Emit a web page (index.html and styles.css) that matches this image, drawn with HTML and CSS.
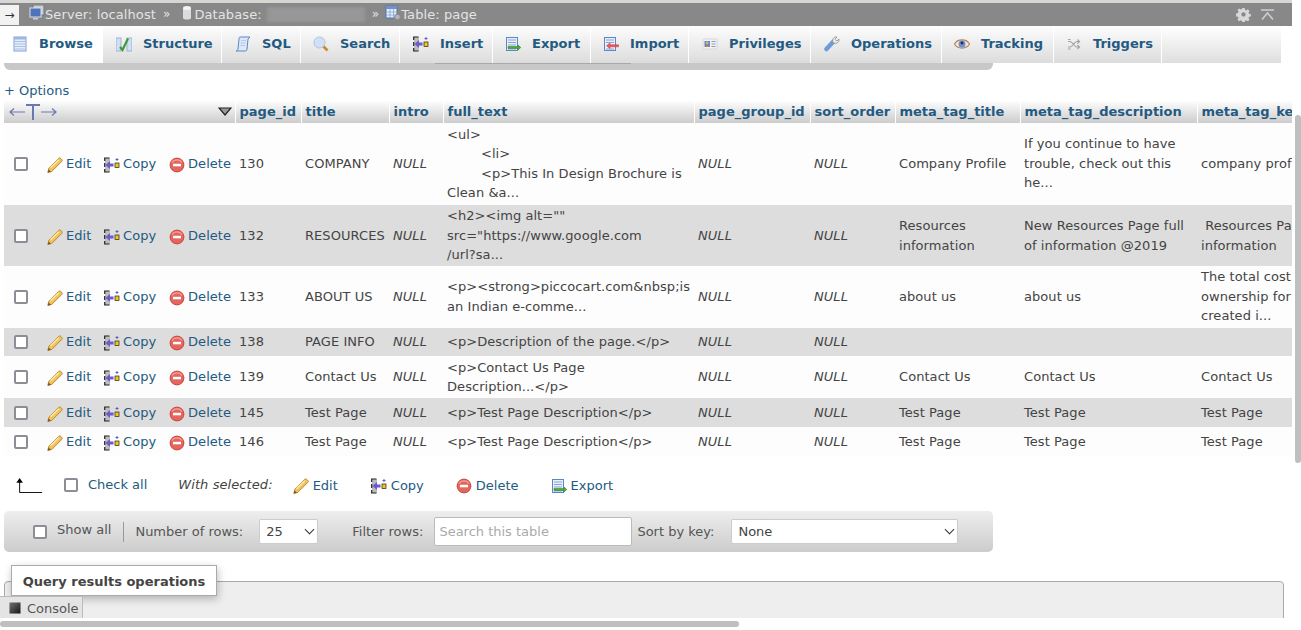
FILE: index.html
```html
<!DOCTYPE html>
<html lang="en">
<head>
<meta charset="utf-8">
<title>Table: page</title>
<link rel="stylesheet" href="styles.css">
</head>
<body>
<svg class="sprites" width="0" height="0" aria-hidden="true">
  <defs>
    <symbol id="i-edit" viewBox="0 0 16 16">
      <path d="M1.800 11.300 11.800 1.300c.8-.6 1.500-.4 2.100.2l.8.8c.6.700.7 1.400.1 2.100L4.800 14.400.8 15.500z" fill="#f2c35c" stroke="#b5832b" stroke-width=".9"/>
      <path d="M3.500 10.800 11.800 2.800" stroke="#fdeeb5" stroke-width="1.200"/>
      <path d="M.8 15.500l.8-3 2.400 2.300z" fill="#7a5424"/>
    </symbol>
    <symbol id="i-copy" viewBox="0 0 16 16">
      <rect x="1" y="1" width="5" height="14" fill="#bdbdbd"/>
      <path d="M5.500 1H.7v3M.7 6v4M.7 12v3h4.800" fill="none" stroke="#222" stroke-width="1.200"/>
      <path d="M1.500 8l4.500-4v2.500h3.500v3H6V12z" fill="#6a5bd0"/>
      <rect x="11" y="6" width="4" height="4.500" fill="#f5c518" stroke="#222" stroke-width=".7"/>
      <path d="M13 1v3M11.500 2.500h3" stroke="#5a50c0" stroke-width=".9"/>
    </symbol>
    <symbol id="i-delete" viewBox="0 0 16 16">
      <circle cx="8" cy="8" r="6.900" fill="#e4665e" stroke="#c9453e"/>
      <path d="M3 5.500c2-3.500 8-3.500 10 0" fill="none" stroke="#f3a29c" stroke-width="1.200"/>
      <rect x="4" y="6.800" width="8" height="2.500" fill="#fff"/>
    </symbol>
    <symbol id="i-export" viewBox="0 0 16 16">
      <rect x="1.500" y="1.500" width="11" height="13" fill="#e8effa" stroke="#5c86c4"/>
      <path d="M3 4h8M3 6.500h8M3 9h8M3 13h8" stroke="#87a6d4"/>
      <path d="M3 10.500h10v-1.500l2.800 2.500-2.800 2.500v-1.500H3z" fill="#4da83a" stroke="#2e7d21" stroke-width=".5"/>
    </symbol>
  </defs>
</svg>

<header class="topbar">
  <a class="topbar-toggle">→</a>
  <nav class="crumbs">
    <span class="crumb">
      <svg class="crumb-icon" viewBox="0 0 16 16"><rect x="4" y="0" width="11" height="10" fill="#c9ced6" stroke="#777"/><rect x="1" y="3" width="11" height="9" fill="#4d74b8" stroke="#dde"/><rect x="4" y="13" width="5" height="1.500" fill="#ccc"/></svg>Server: localhost
    </span>
    <span class="sep">»</span>
    <span class="crumb">
      <svg class="crumb-icon db" viewBox="0 0 10 16"><path d="M1 3v10c0 2 8 2 8 0V3z" fill="#dcdcdc"/><ellipse cx="5" cy="3" rx="4" ry="2" fill="#f4f4f4"/></svg>Database:
      <span class="blur"></span>
    </span>
    <span class="sep sep-last">»</span>
    <span class="crumb">
      <svg class="crumb-icon" viewBox="0 0 16 16"><rect x="1" y="1" width="11" height="12" fill="#e7eef8" stroke="#4d74b8"/><rect x="1" y="1" width="11" height="3" fill="#6f93cc"/><path d="M1 7h11M1 10h11M5 4v9M8.500 4v9" stroke="#88a4d0" stroke-width=".8"/><circle cx="12.500" cy="12" r="2.800" fill="#b5b5b5" stroke="#888"/></svg>Table: page
    </span>
  </nav>
  <div class="topbar-tools">
    <svg class="gear" viewBox="0 0 16 16"><path d="M6.800 1h2.400l.4 2 1.300.6 1.800-1.100 1.700 1.700-1.100 1.800.6 1.300 2 .4v2.400l-2 .4-.6 1.300 1.100 1.800-1.700 1.700-1.800-1.100-1.300.6-.4 2H6.800l-.4-2-1.300-.6-1.800 1.100-1.700-1.700 1.100-1.800-.6-1.300-2-.4V6.800l2-.4.6-1.300-1.100-1.800 1.700-1.700 1.800 1.100 1.300-.6z" fill="#d8d8d8"/><circle cx="8" cy="8" r="2.300" fill="#888"/></svg>
    <svg class="collapse" viewBox="0 0 13 12"><path d="M0 1h13M1 10.500l5.500-6.500 5.500 6.500" fill="none" stroke="#d0d0d0" stroke-width="1.500"/></svg>
  </div>
</header>

<div class="tabs-wrap">
  <nav class="tabs">
    <a class="tab active">
      <svg class="tab-icon" viewBox="0 0 16 16"><rect x="2" y="1" width="12" height="14" fill="#e6eefa" stroke="#7f9fd2"/><rect x="2" y="1" width="12" height="2.500" fill="#9db8e4"/><path d="M3 5.500h10M3 8h10M3 10.500h10M3 13h10" stroke="#a9c0e6"/></svg>Browse</a>
    <a class="tab tab-structure">
      <svg class="tab-icon" viewBox="0 0 16 16"><rect x="0" y="2" width="5" height="13" fill="#cfe0f5" stroke="#9fb4d4"/><rect x="11" y="2" width="5" height="13" fill="#cfe0f5" stroke="#9fb4d4"/><path d="M4 11l2.500 3L12 2.500" fill="none" stroke="#3f9a3a" stroke-width="2.200"/></svg>Structure</a>
    <a class="tab tab-sql">
      <svg class="tab-icon" viewBox="0 0 16 16"><path d="M5 1h10l-2 2-1 10c-.2 2-1 2-2 2H1c1 0 2-1 2-2l1-10c.1-1 .2-2 1-2z" fill="#dce7f7" stroke="#5c86c4"/><path d="M6 4.500h5M5.500 7h5M5.300 9.500h5" stroke="#b5cbe9"/></svg>SQL</a>
    <a class="tab tab-search">
      <svg class="tab-icon" viewBox="0 0 16 16"><circle cx="6.500" cy="6.500" r="5.500" fill="#cfe0f7" stroke="#b6c3d4"/><path d="M10.500 10.500l4 4" stroke="#c88a3a" stroke-width="2.600"/></svg>Search</a>
    <a class="tab tab-insert">
      <svg class="tab-icon" viewBox="0 0 16 16"><use href="#i-copy"/></svg>Insert</a>
    <a class="tab tab-export">
      <svg class="tab-icon" viewBox="0 0 16 16"><use href="#i-export"/></svg>Export</a>
    <a class="tab tab-import">
      <svg class="tab-icon" viewBox="0 0 16 16"><rect x="1.500" y="1.500" width="11" height="13" fill="#e8effa" stroke="#5c86c4"/><path d="M3 4h8M3 6.500h8M3 13h8" stroke="#87a6d4"/><path d="M15.500 8.800H7V7L3.500 9.800 7 12.500v-1.700h8.500z" fill="#f05a5a" stroke="#c62f2f" stroke-width=".5"/></svg>Import</a>
    <a class="tab tab-priv">
      <svg class="tab-icon" viewBox="0 0 16 16"><rect x="1" y="3" width="14" height="10" rx="1" fill="#f0f2f6" stroke="#d4d8e0"/><rect x="2.500" y="5" width="5.500" height="6" fill="#5b86d0"/><circle cx="5.200" cy="7" r="1.400" fill="#f0b050"/><path d="M3 11c.5-2 4-2 4.500 0" fill="#e07a3a"/><path d="M9.500 5.500h4M9.500 8h4M9.500 10.500h4" stroke="#8d9db8"/></svg>Privileges</a>
    <a class="tab tab-ops">
      <svg class="tab-icon" viewBox="0 0 16 16"><path d="M2.500 13 9 6" stroke="#6f9bd8" stroke-width="4.500" stroke-linecap="round"/><path d="M9 6.500c-1-3.500 1-6 4-5.500l-2 2.500 2 1.500 2-2c.5 3-2 5-5 4z" fill="#f1f1f1" stroke="#8a8a8a" stroke-width=".8"/></svg>Operations</a>
    <a class="tab tab-track">
      <svg class="tab-icon" viewBox="0 0 16 16"><path d="M.5 8c3-5.500 12-5.500 15 0-3 5.500-12 5.500-15 0z" fill="#f5ead9" stroke="#b9825a" stroke-width="1.200"/><circle cx="8" cy="8" r="3.500" fill="#6c8fd6"/><circle cx="8" cy="7" r="1.400" fill="#1d2f52"/></svg>Tracking</a>
    <a class="tab tab-trig">
      <svg class="tab-icon" viewBox="0 0 16 16"><path d="M2 5.500h2c3 0 4 5.500 7 5.500h2M2 11h2c3 0 4-5.500 7-5.500h2M2 3.500l2.500 0M2 13l2.500 0M11.500 3.500l2 2-2 2M11.500 9l2 2-2 2" fill="none" stroke="#a2a2a2" stroke-width="1.100"/></svg>Triggers</a>
  </nav>
</div>

<main class="content">
  <a class="options">+ Options</a>

  <div class="table-clip">
    <table class="results">
      <colgroup>
        <col class="c-check"><col class="c-edit"><col class="c-copy"><col class="c-del">
        <col class="c-id"><col class="c-title"><col class="c-intro"><col class="c-full">
        <col class="c-group"><col class="c-sort"><col class="c-mtitle"><col class="c-mdesc"><col class="c-mkey">
      </colgroup>
      <thead>
        <tr>
          <th colspan="4" class="th-actions">
            <div class="th-actions-in">
              <svg class="resize" viewBox="0 0 48 16"><path d="M1 8h15M5 4.500 1 8l4 3.500M32 8h15M43 4.500 47 8l-4 3.500" fill="none" stroke="#6a78b0" stroke-width="1.200"/><path d="M17 1h14M24 1v15" fill="none" stroke="#6a78b0" stroke-width="2"/></svg>
              <svg class="sort-caret" viewBox="0 0 14 9"><path d="M1 1h12L7 8z" fill="#999" stroke="#222" stroke-width="1.200"/></svg>
            </div>
          </th>
          <th>page_id</th><th>title</th><th>intro</th><th>full_text</th><th>page_group_id</th><th>sort_order</th><th>meta_tag_title</th><th>meta_tag_description</th><th class="nowrap">meta_tag_keyword</th>
        </tr>
      </thead>
      <tbody>
        <tr class="h-82">
          <td class="ck"><input type="checkbox"></td>
          <td class="act"><a><svg class="ic"><use href="#i-edit"/></svg>Edit</a></td>
          <td class="act"><a><svg class="ic"><use href="#i-copy"/></svg>Copy</a></td>
          <td class="act"><a><svg class="ic"><use href="#i-delete"/></svg>Delete</a></td>
          <td>130</td><td>COMPANY</td><td class="null">NULL</td>
          <td class="full"><div class="nest1">&lt;ul&gt;</div><div class="nest2">&lt;li&gt;</div><div class="nest3">&lt;p&gt;This In Design Brochure is</div><div>Clean &amp;a...</div></td>
          <td class="null">NULL</td><td class="null">NULL</td><td>Company Profile</td>
          <td>If you continue to have trouble, check out this he...</td><td class="nowrap">company profile</td>
        </tr>
        <tr class="h-61">
          <td class="ck"><input type="checkbox"></td>
          <td class="act"><a><svg class="ic"><use href="#i-edit"/></svg>Edit</a></td>
          <td class="act"><a><svg class="ic"><use href="#i-copy"/></svg>Copy</a></td>
          <td class="act"><a><svg class="ic"><use href="#i-delete"/></svg>Delete</a></td>
          <td>132</td><td>RESOURCES</td><td class="null">NULL</td>
          <td class="full">&lt;h2&gt;&lt;img alt=""<br>src="https://www.google.com<br>/url?sa...</td>
          <td class="null">NULL</td><td class="null">NULL</td><td>Resources information</td>
          <td>New Resources Page full of information @2019</td><td class="nowrap">&nbsp;Resources Page<br>information</td>
        </tr>
        <tr class="h-62">
          <td class="ck"><input type="checkbox"></td>
          <td class="act"><a><svg class="ic"><use href="#i-edit"/></svg>Edit</a></td>
          <td class="act"><a><svg class="ic"><use href="#i-copy"/></svg>Copy</a></td>
          <td class="act"><a><svg class="ic"><use href="#i-delete"/></svg>Delete</a></td>
          <td>133</td><td>ABOUT US</td><td class="null">NULL</td>
          <td class="full nowrap">&lt;p&gt;&lt;strong&gt;piccocart.com&amp;nbsp;is<br>an Indian e-comme...</td>
          <td class="null">NULL</td><td class="null">NULL</td><td>about us</td><td>about us</td>
          <td class="nowrap">The total cost of<br>ownership for<br>created i...</td>
        </tr>
        <tr class="h-28">
          <td class="ck"><input type="checkbox"></td>
          <td class="act"><a><svg class="ic"><use href="#i-edit"/></svg>Edit</a></td>
          <td class="act"><a><svg class="ic"><use href="#i-copy"/></svg>Copy</a></td>
          <td class="act"><a><svg class="ic"><use href="#i-delete"/></svg>Delete</a></td>
          <td>138</td><td>PAGE INFO</td><td class="null">NULL</td>
          <td class="full">&lt;p&gt;Description of the page.&lt;/p&gt;</td>
          <td class="null">NULL</td><td class="null">NULL</td><td></td><td></td><td></td>
        </tr>
        <tr class="h-42">
          <td class="ck"><input type="checkbox"></td>
          <td class="act"><a><svg class="ic"><use href="#i-edit"/></svg>Edit</a></td>
          <td class="act"><a><svg class="ic"><use href="#i-copy"/></svg>Copy</a></td>
          <td class="act"><a><svg class="ic"><use href="#i-delete"/></svg>Delete</a></td>
          <td>139</td><td>Contact Us</td><td class="null">NULL</td>
          <td class="full">&lt;p&gt;Contact Us Page<br>Description...&lt;/p&gt;</td>
          <td class="null">NULL</td><td class="null">NULL</td><td>Contact Us</td><td>Contact Us</td><td class="nowrap">Contact Us</td>
        </tr>
        <tr class="h-29">
          <td class="ck"><input type="checkbox"></td>
          <td class="act"><a><svg class="ic"><use href="#i-edit"/></svg>Edit</a></td>
          <td class="act"><a><svg class="ic"><use href="#i-copy"/></svg>Copy</a></td>
          <td class="act"><a><svg class="ic"><use href="#i-delete"/></svg>Delete</a></td>
          <td>145</td><td>Test Page</td><td class="null">NULL</td>
          <td class="full">&lt;p&gt;Test Page Description&lt;/p&gt;</td>
          <td class="null">NULL</td><td class="null">NULL</td><td>Test Page</td><td>Test Page</td><td class="nowrap">Test Page</td>
        </tr>
        <tr class="h-29">
          <td class="ck"><input type="checkbox"></td>
          <td class="act"><a><svg class="ic"><use href="#i-edit"/></svg>Edit</a></td>
          <td class="act"><a><svg class="ic"><use href="#i-copy"/></svg>Copy</a></td>
          <td class="act"><a><svg class="ic"><use href="#i-delete"/></svg>Delete</a></td>
          <td>146</td><td>Test Page</td><td class="null">NULL</td>
          <td class="full">&lt;p&gt;Test Page Description&lt;/p&gt;</td>
          <td class="null">NULL</td><td class="null">NULL</td><td>Test Page</td><td>Test Page</td><td class="nowrap">Test Page</td>
        </tr>
      </tbody>
    </table>
  </div>

  <div class="bulk">
    <svg class="arrow-up" viewBox="0 0 30 16"><path d="M5 15.500h24M5 15.500V3" fill="none" stroke="#000" stroke-width="1"/><path d="M5 0l3.500 5h-7z" fill="#000"/></svg>
    <input type="checkbox" class="bulk-check">
    <a class="check-all">Check all</a>
    <em class="with">With selected:</em>
    <a class="bulk-btn b-edit"><svg class="ic"><use href="#i-edit"/></svg>Edit</a>
    <a class="bulk-btn b-copy"><svg class="ic"><use href="#i-copy"/></svg>Copy</a>
    <a class="bulk-btn b-del"><svg class="ic"><use href="#i-delete"/></svg>Delete</a>
    <a class="bulk-btn b-exp"><svg class="ic"><use href="#i-export"/></svg>Export</a>
  </div>

  <div class="nav-bar">
    <input type="checkbox" class="show-check">
    <label class="show-all">Show all</label>
    <span class="divider"></span>
    <label class="lbl-rows">Number of rows:</label>
    <span class="sel-wrap sel-wrap-rows"><select class="sel"><option>25</option></select></span>
    <label class="lbl-filter">Filter rows:</label>
    <input class="filter" type="text" placeholder="Search this table">
    <label class="lbl-sort">Sort by key:</label>
    <span class="sel-wrap sel-wrap-sort"><select class="sel"><option>None</option></select></span>
  </div>

  <section class="ops">
    <h3 class="ops-title">Query results operations</h3>
  </section>
</main>

<div class="console">
  <svg class="console-icon" viewBox="0 0 12 12"><defs><linearGradient id="cg" x1="0" y1="0" x2="1" y2="1"><stop offset="0" stop-color="#777"/><stop offset="1" stop-color="#111"/></linearGradient></defs><rect width="12" height="12" fill="url(#cg)" stroke="#ddd"/></svg>
  Console
</div>

<div class="hscroll"></div>
<div class="vscroll"></div>
</body>
</html>
```
FILE: styles.css
```css
* { box-sizing: border-box; }
html, body { margin: 0; height: 100%; overflow: hidden; }
body {
  position: relative;
  width: 1301px;
  height: 630px;
  background: #fff;
  color: #444;
  font: 13px/19px "DejaVu Sans", sans-serif;
}
a { color: #235a81; text-decoration: none; }
.sprites { position: absolute; }

/* top bar */
.topbar {
  display: flex;
  align-items: center;
  height: 26px;
  margin-right: 9px;
  border-top: 3px solid #d8d6d2;
  background: #888;
  color: #e4e4e4;
  letter-spacing: .1px;
}
.topbar-toggle {
  display: flex;
  align-items: center;
  justify-content: center;
  width: 19px;
  height: 20px;
  margin-top: 1px;
  background: #f2f2f2;
  color: #333;
  font-size: 12px;
}
.crumbs { display: flex; align-items: center; padding-left: 10px; flex: 1; }
.crumb { display: flex; align-items: center; }
.crumb-icon { width: 16px; height: 16px; margin-bottom: 3px; }
.crumb-icon.db { width: 10px; margin-right: 2px; margin-left: 0; }
.sep { margin: 0 12px 0 7px; font-size: 12px; }
.sep-last { margin: 0 6px 0 7px; }
.blur {
  display: inline-block;
  width: 98px;
  height: 15px;
  margin-left: 5px;
  background: #979797;
  filter: blur(1.500px);
}
.topbar-tools { display: flex; align-items: center; gap: 10px; padding-right: 18px; }
.gear { width: 15px; height: 15px; }
.collapse { width: 13px; height: 12px; }

/* tabs */
.tabs-wrap {
  position: relative;
  height: 44px;
  margin-right: 20px;
}
.tabs-wrap::before {
  content: "";
  position: absolute;
  z-index: 1;
  left: 435px;
  top: 37px;
  width: 196px;
  height: 1px;
  background: #a8a8a8;
}
.tabs-wrap::after {
  content: "";
  position: absolute;
  left: 4px;
  top: 30px;
  width: 989px;
  height: 14px;
  border-radius: 0 0 6px 6px;
  background: #c8c8c8;
}
.tabs {
  position: relative;
  z-index: 1;
  display: flex;
  height: 37px;
  background: linear-gradient(#fff, #dedede);
}
.tab {
  display: flex;
  align-items: center;
  height: 37px;
  padding-left: 12px;
  padding-bottom: 2px;
  border-right: 1px solid #fff;
  background: linear-gradient(#fdfdfd, #dcdcdc);
  color: #235a81;
  font-weight: 700;
  font-size: 13px;
}
.tab-icon { flex: none; width: 16px; height: 16px; margin-right: 11px; }
.tab.active { width: 103px; background: #fff; }
.tab-structure { width: 119px; padding-left: 13px; }
.tab-sql { width: 79px; padding-left: 13px; }
.tab-search { padding-left: 12px; width: 99px; }
.tab-insert { width: 93px; padding-left: 13px; }
.tab-export { width: 98px; }
.tab-import { width: 98px; }
.tab-priv { width: 122px; padding-left: 13px; }
.tab-ops { width: 131px; padding-left: 13px; }
.tab-track { width: 112px; padding-left: 12px; }
.tab-trig { width: 108px; }

/* content */
.content { padding: 0 4px; }
.options { display: block; height: 19px; margin-top: 11px; line-height: 19px; }

.table-clip { width: 1288px; overflow: hidden; }
.results {
  width: 1476px;
  table-layout: fixed;
  border-collapse: collapse;
}
.c-check { width: 39px; }
.c-edit { width: 57px; }
.c-copy { width: 65px; }
.c-del { width: 70px; }
.c-id { width: 66px; }
.c-title { width: 88px; }
.c-intro { width: 54px; }
.c-full { width: 251px; }
.c-group { width: 116px; }
.c-sort { width: 85px; }
.c-mtitle { width: 125px; }
.c-mdesc { width: 177px; }
.c-mkey { width: 283px; }

.results th {
  height: 23px;
  padding: 0 4px;
  border-right: 1px solid #fff;
  background: linear-gradient(#fff, #ccc);
  color: #235a81;
  font-weight: 700;
  text-align: left;
  white-space: nowrap;
}
.th-actions-in { display: flex; align-items: center; justify-content: space-between; margin-right: -1px; }
.resize { width: 48px; height: 16px; margin-left: 1px; }
.sort-caret { width: 14px; height: 9px; }
.results td {
  padding: 0 4px;
  background: #fdfdfd;
  line-height: 19.500px;
  letter-spacing: .06px;
  vertical-align: middle;
  overflow: hidden;
}
.results tbody tr:nth-child(even) td { background: #ddd; }
.results .h-82 td, .results .h-62 td, .results .h-28 td { padding-bottom: 1px; }
.h-82 { height: 82px; }
.h-61 { height: 61px; }
.h-62 { height: 62px; }
.h-28 { height: 28px; }
.h-42 { height: 42px; }
.h-29 { height: 29px; }
.nowrap { white-space: nowrap; }
.null { font-style: italic; }
.results td.ck { padding: 0 0 1px 10px; }
.nest2 { padding-left: 34px; }
.nest3 { padding-left: 34px; }
.act { white-space: nowrap; }
.act a { display: flex; align-items: center; }
.bulk-btn { display: inline-flex; align-items: center; }
.ic { flex: none; width: 16px; height: 16px; margin-right: 3px; margin-top: 2px; }
.bulk-btn .ic { margin-right: 4px; }
input[type="checkbox"] {
  appearance: none;
  width: 14px;
  height: 14px;
  margin: 0;
  border: 2px solid #8d8d97;
  border-radius: 2px;
  background: #fff;
  vertical-align: middle;
}

/* bulk row */
.bulk {
  display: flex;
  align-items: center;
  height: 30px;
  margin-top: 14px;
}
.arrow-up { width: 30px; height: 15px; margin-left: 10px; flex: none; }
.bulk-check { margin-left: 20px !important; }
.check-all { margin-left: 10px; margin-top: -2px; }
.with { margin-left: 31px; margin-top: -2px; letter-spacing: .08px; }
.bulk-btn { margin-left: 20px; }
.b-copy { margin-left: 33px; }
.b-del { margin-left: 32px; }
.b-exp { margin-left: 32px; }

/* nav */
.nav-bar {
  display: flex;
  align-items: center;
  width: 989px;
  height: 41px;
  margin-top: 11px;
  padding-left: 29px;
  border-radius: 5px;
  background: linear-gradient(#eee, #ccc);
  color: #555;
}
.show-all { margin-left: 10px; margin-top: -4px; }
.divider { width: 1px; height: 20px; margin-left: 12px; background: #999; }
.lbl-rows { margin-left: 11px; }
.sel-wrap { position: relative; display: block; height: 25px; margin-left: 15px; }
.sel-wrap::after {
  content: "";
  position: absolute;
  right: 5px;
  top: 7px;
  width: 6px;
  height: 6px;
  border-right: 1px solid #333;
  border-bottom: 1px solid #333;
  transform: rotate(45deg);
  pointer-events: none;
}
.sel-wrap-rows { width: 59px; margin-left: 16px; }
.sel-wrap-sort { width: 227px; margin-left: 17px; }
.sel {
  appearance: none;
  width: 100%;
  height: 25px;
  border: 1px solid #ccc;
  border-radius: 2px;
  background: #fff;
  color: #444;
  font: 13px "DejaVu Sans", sans-serif;
  padding-left: 6px;
}
.lbl-filter { margin-left: 34px; }
.filter {
  width: 198px;
  height: 29px;
  margin-left: 11px;
  padding: 0 4px;
  border: 1px solid #bbb;
  border-radius: 2px;
  font: 13px "DejaVu Sans", sans-serif;
}
.filter::placeholder { color: #aaa; }
.lbl-sort { margin-left: 5px; }

/* ops */
.ops {
  position: relative;
  width: 1280px;
  height: 60px;
  margin-top: 29px;
  border: 1px solid #aaa;
  border-radius: 4px 4px 0 0;
  background: #eee;
}
.ops-title {
  position: absolute;
  left: 6px;
  top: -17px;
  width: 206px;
  height: 31px;
  margin: 0;
  border: 1px solid #aaa;
  background: #fff;
  box-shadow: 1px 3px 8px rgba(0,0,0,.25);
  color: #444;
  font: 700 13px/31px "DejaVu Sans", sans-serif;
  text-align: center;
}

/* console + scrollbars */
.console {
  position: absolute;
  left: 0;
  top: 596px;
  display: flex;
  align-items: center;
  gap: 6px;
  width: 83px;
  height: 22px;
  padding: 1px 0 0 9px;
  background: #e4e4e4;
  border-right: 1px solid #bbb;
  border-top: 1px solid #bbb;
  color: #555;
}
.console-icon { width: 12px; height: 12px; }
.hscroll {
  position: absolute;
  left: 0;
  top: 618px;
  width: 1301px;
  height: 12px;
  background: #fff;
}
.hscroll::after {
  content: "";
  position: absolute;
  left: 0;
  top: 3px;
  width: 739px;
  height: 6px;
  border-radius: 3px;
  background: #bfbfbf;
}
.vscroll {
  position: absolute;
  right: 0;
  top: 115px;
  width: 6px;
  height: 348px;
  border-radius: 3px;
  background: #bfbfbf;
}
```
